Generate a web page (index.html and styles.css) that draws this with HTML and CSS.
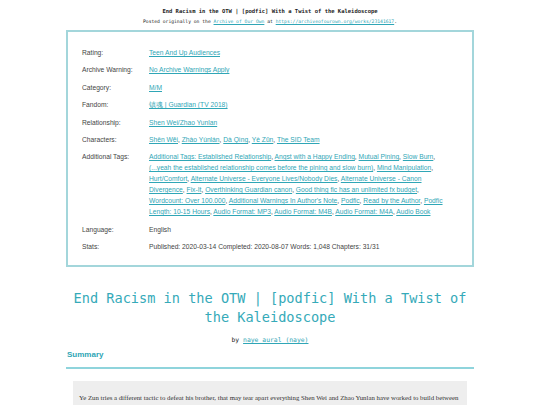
FILE: index.html
```html
<!DOCTYPE html>
<html>
<head>
<meta charset="utf-8">
<link rel="stylesheet" href="styles.css">
</head>
<body>
<div class="page">
  <div class="meta-head">
    <p class="top-title">End Racism in the OTW | [podfic] With a Twist of the Kaleidoscope</p>
    <p class="posted">Posted originally on the <a href="#">Archive of Our Own</a> at <a href="#">https://archiveofourown.org/works/23141617</a>.</p>
  </div>
  <div class="meta">
    <dl class="tags">
      <dt>Rating:</dt>
      <dd><a href="#">Teen And Up Audiences</a></dd>
      <dt>Archive Warning:</dt>
      <dd><a href="#">No Archive Warnings Apply</a></dd>
      <dt>Category:</dt>
      <dd><a href="#">M/M</a></dd>
      <dt>Fandom:</dt>
      <dd><a href="#">镇魂 | Guardian (TV 2018)</a></dd>
      <dt>Relationship:</dt>
      <dd><a href="#">Shen Wei/Zhao Yunlan</a></dd>
      <dt>Characters:</dt>
      <dd><a href="#">Shěn Wēi</a>, <a href="#">Zhào Yúnlán</a>, <a href="#">Dà Qìng</a>, <a href="#">Yè Zūn</a>, <a href="#">The SID Team</a></dd>
      <dt>Additional Tags:</dt>
      <dd><a href="#">Additional Tags: Established Relationship</a>, <a href="#">Angst with a Happy Ending</a>, <a href="#">Mutual Pining</a>, <a href="#">Slow Burn</a>, <a href="#">(...yeah the established relationship comes before the pining and slow burn)</a>, <a href="#">Mind Manipulation</a>, <a href="#">Hurt/Comfort</a>, <a href="#">Alternate Universe - Everyone Lives/Nobody Dies</a>, <a href="#">Alternate Universe - Canon Divergence</a>, <a href="#">Fix-It</a>, <a href="#">Overthinking Guardian canon</a>, <a href="#">Good thing fic has an unlimited fx budget</a>, <a href="#">Wordcount: Over 100.000</a>, <a href="#">Additional Warnings In Author's Note</a>, <a href="#">Podfic</a>, <a href="#">Read by the Author</a>, <a href="#">Podfic Length: 10-15 Hours</a>, <a href="#">Audio Format: MP3</a>, <a href="#">Audio Format: M4B</a>, <a href="#">Audio Format: M4A</a>, <a href="#">Audio Book</a></dd>
      <dt>Language:</dt>
      <dd>English</dd>
      <dt>Stats:</dt>
      <dd>Published: 2020-03-14 Completed: 2020-08-07 Words: 1,048 Chapters: 31/31</dd>
    </dl>
  </div>
  <h1 class="title">End Racism in the OTW | [podfic] With a Twist of the Kaleidoscope</h1>
  <p class="byline">by <a href="#">naye_aural (naye)</a></p>
  <h2 class="summary-head">Summary</h2>
  <blockquote class="userstuff">
    <p>Ye Zun tries a different tactic to defeat his brother, that may tear apart everything Shen Wei and Zhao Yunlan have worked to build between them.</p>
  </blockquote>
</div>
</body>
</html>
```

FILE: styles.css
```css
html, body {
  margin: 0;
  padding: 0;
  background: #ffffff;
}
body {
  font-family: "Liberation Sans", Arial, sans-serif;
  color: #444;
}
.page {
  margin: 0 66px;
  padding-top: 8px;
}
a {
  color: #2fa6b6;
  text-decoration: underline;
}
.meta-head {
  text-align: center;
  font-family: "DejaVu Sans Mono", monospace;
  color: #222;
}
.top-title {
  margin: 0;
  font-size: 5.5px;
  line-height: 7px;
  font-weight: bold;
}
.posted {
  margin: 3px 0 0;
  font-size: 4.7px;
  line-height: 7px;
}
.meta {
  margin-top: 5px;
  border: 2px solid #a3d6db;
  padding: 15px 18px 13px 14px;
}
.tags {
  margin: 0;
  display: grid;
  grid-template-columns: 67px 1fr;
  row-gap: 6.4px;
  font-size: 6.7px;
  line-height: 11px;
}
.tags dt {
  margin: 0;
  color: #444;
}
.tags dd {
  margin: 0;
  color: #444;
}
.title {
  margin: 22px 0 0;
  text-align: center;
  font-family: "DejaVu Sans Mono", monospace;
  font-weight: normal;
  font-size: 13.6px;
  line-height: 19px;
  color: #35aab9;
}
.byline {
  margin: 9px 0 0;
  text-align: center;
  font-family: "DejaVu Sans Mono", monospace;
  font-size: 6.4px;
  line-height: 8px;
  color: #222;
}
.summary-head {
  margin: 6px 0 0;
  padding-left: 1px;
  padding-bottom: 7px;
  font-size: 8px;
  line-height: 10px;
  font-weight: bold;
  color: #2fa6b6;
  border-bottom: 2px solid #8fd4dc;
}
.userstuff {
  margin: 12px 7px 0;
  background: #eeeeee;
  padding: 11.5px 4px 10px 6px;
  font-family: "Liberation Serif", "Times New Roman", serif;
  font-size: 6.8px;
  line-height: 9px;
  color: #333;
}
.userstuff p {
  margin: 0;
}
```
